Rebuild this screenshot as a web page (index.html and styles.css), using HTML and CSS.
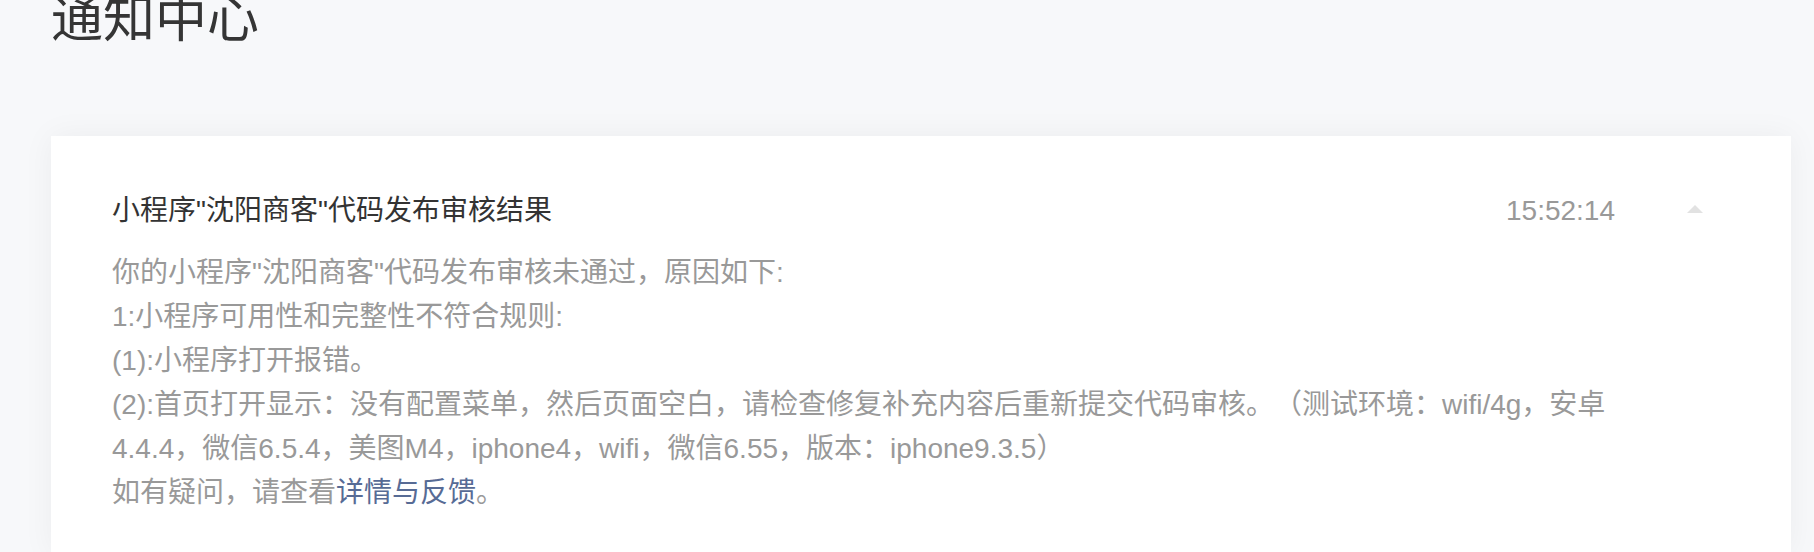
FILE: index.html
```html
<!DOCTYPE html>
<html lang="zh-CN">
<head>
  <meta charset="UTF-8" />
  <meta name="viewport" content="width=device-width, initial-scale=1.0"/>
  <title>通知中心</title>
  <link rel="stylesheet" href="styles.css">
</head>
<body>
  <div class="page">
    <h1 class="page-title">通知中心</h1>

    <div class="notice">
      <div class="notice-head">
        <div class="notice-title">小程序"沈阳商客"代码发布审核结果</div>
        <div class="notice-time">15:52:14</div>
        <span class="notice-toggle"></span>
      </div>
      <div class="notice-body">
        <p>你的小程序"沈阳商客"代码发布审核未通过，原因如下:</p>
        <p>1:小程序可用性和完整性不符合规则:</p>
        <p>(1):小程序打开报错。</p>
        <p>(2):首页打开显示：没有配置菜单，然后页面空白，请检查修复补充内容后重新提交代码审核。（测试环境：wifi/4g，安卓4.4.4，微信6.5.4，美图M4，iphone4，wifi，微信6.55，版本：iphone9.3.5）</p>
        <p>如有疑问，请查看<a href="#">详情与反馈</a>。</p>
      </div>
    </div>
  </div>
</body>
</html>
```

FILE: styles.css
```css
body {
  margin: 0;
  font-family: "Liberation Sans", "Noto Sans CJK SC", sans-serif;
  background: #f7f8fa;
  color: #333;
  text-spacing-trim: space-all;
}

.page {
  padding: 0 23px 0 51px;
}

.page-title {
  margin: -7px 0 91px;
  font-size: 52px;
  line-height: 52px;
  font-weight: normal;
  color: #353535;
}

.notice {
  background: #fff;
  padding: 55px 60px 40px 61px;
  box-shadow: 0 0 30px rgba(0, 0, 0, 0.05);
}

.notice-head {
  display: flex;
  align-items: center;
  font-size: 28px;
  line-height: 40px;
}

.notice-title {
  flex: 1;
  color: #333;
}

.notice-time {
  color: #999;
}

.notice-toggle {
  width: 0;
  height: 0;
  margin: 0 28px 4px 72px;
  border-left: 8px solid transparent;
  border-right: 8px solid transparent;
  border-bottom: 8px solid #e2e2e2;
}

.notice-body {
  margin-top: 20px;
  padding-right: 100px;
  font-size: 28px;
  line-height: 44px;
  color: #999;
}

.notice-body p {
  margin: 0;
}

.notice-body a {
  color: #576b95;
  text-decoration: none;
}
```
